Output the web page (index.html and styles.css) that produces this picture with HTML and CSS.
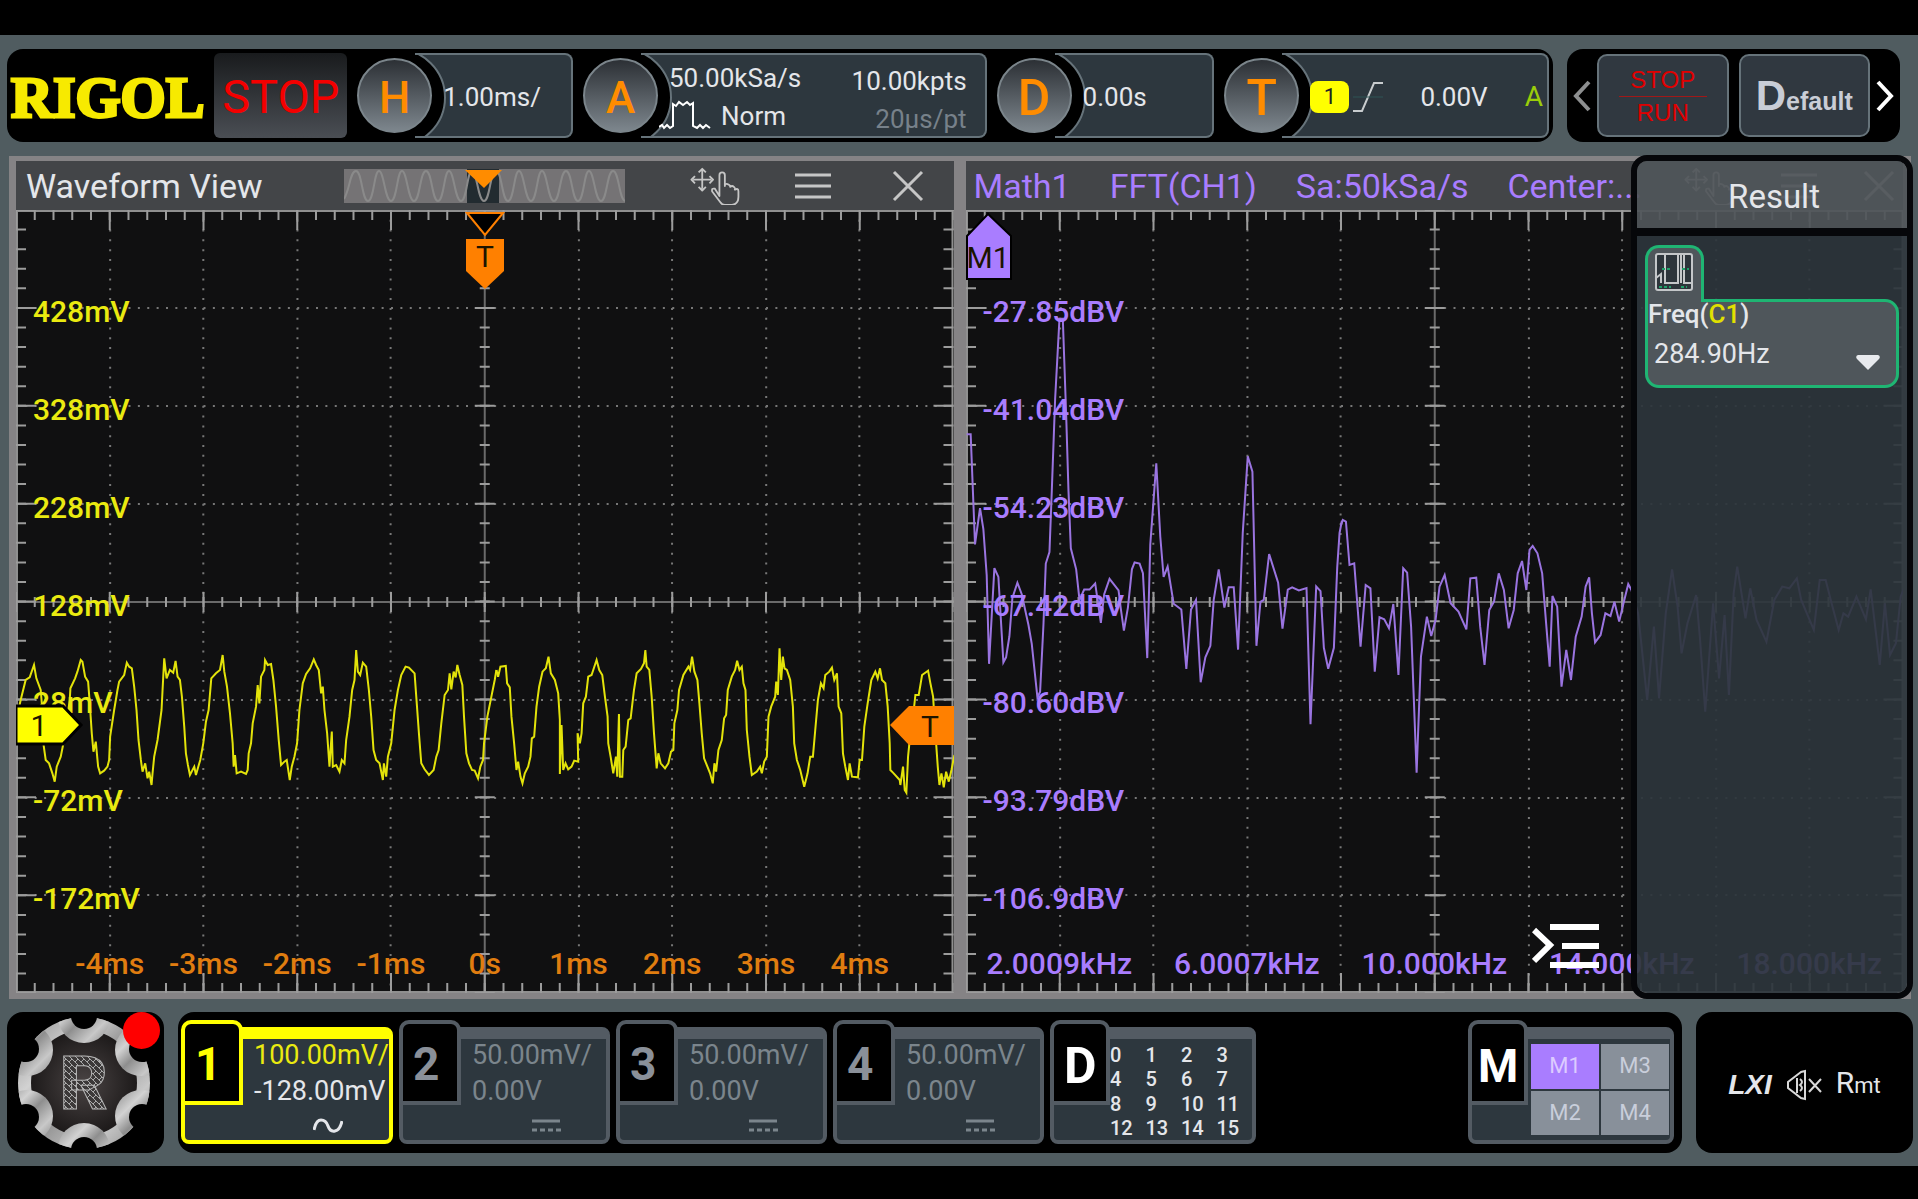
FILE: index.html
```html
<!DOCTYPE html>
<html lang="en">
<head>
  <meta charset="utf-8">
  <title>RIGOL</title>
  <link rel="stylesheet" href="styles.css">
</head>
<body>
<!-- shared drawings -->
<svg class="defs" aria-hidden="true">
  <defs>
    <g id="graticule" fill="none">
      <g stroke="#777" stroke-width="2">
        <path stroke-dasharray="2 7.79" d="M94 0V783M187 0V783M281 0V783M374 0V783M562 0V783M655 0V783M749 0V783M842 0V783"/>
        <path stroke-dasharray="2 7.36" d="M0 98H936M0 196H936M0 294H936M0 490H936M0 588H936M0 685H936"/>
      </g>
      <path stroke="#6a6a6a" stroke-width="2" d="M468 0V783M0 392H936"/>
      <rect x="1" y="1" width="934" height="781" stroke="#8f8f8f" stroke-width="2"/>
      <g stroke="#9c9c9c">
        <path stroke-width="10" stroke-dasharray="2 16.72" stroke-dashoffset="1" d="M0 5H936M0 392H936M0 778H936"/>
        <path stroke-width="20" stroke-dasharray="2 91.6" stroke-dashoffset="1" d="M0 10H936M0 392H936M0 773H936"/>
        <path stroke-width="10" stroke-dasharray="2 17.58" stroke-dashoffset="1" d="M5 0V783M468 0V783M931 0V783"/>
        <path stroke-width="20" stroke-dasharray="2 95.88" stroke-dashoffset="1" d="M10 0V783M468 0V783M926 0V783"/>
      </g>
    </g>
    <g id="drag-hand" fill="none" stroke="currentColor" stroke-width="2" stroke-linejoin="round">
      <path d="M14 4v20M4 14h20M10 6l4-4 4 4M10 22l4 4 4-4M6 10l-4 4 4 4M22 10l4 4-4 4"/>
      <path d="M33 32V9q0-3 3-3t3 3v12q0-3 3-2t3 3q2-2 4 0t1 3q4-2 4 2v6q0 8-7 9h-8q-3 0-5-3l-9-12q-1-4 3-3z"/>
    </g>
    <g id="menu-lines" stroke="currentColor" stroke-width="3">
      <path d="M0 3H36M0 14H36M0 25H36"/>
    </g>
    <path id="cross" fill="none" stroke="currentColor" stroke-width="3" d="M2 2L30 30M30 2L2 30"/>
    <g id="dc" stroke="currentColor" stroke-width="3">
      <path d="M1 3H29"/>
      <path stroke-dasharray="5 3" d="M1 12H30"/>
    </g>
  </defs>
</svg>

<div class="device">
  <header class="top">
    <div class="bar status-bar">
      <div class="logo">RIGOL</div>
      <button class="run-state">STOP</button>

      <section class="setting">
        <button class="knob">H</button>
        <div class="readout"><span>1.00ms/</span></div>
      </section>

      <section class="setting">
        <button class="knob">A</button>
        <div class="readout acquire">
          <div class="acquire-left">
            <span>50.00kSa/s</span>
            <span class="acquire-mode">
              <svg width="52" height="30" viewBox="0 0 52 30"><path fill="none" stroke="#fff" stroke-width="2" d="M0 27l3-2 2 3 3-3 3 3 3-2V4l3 2 3-4 4 3 4-3 3 3 3-2V26l4 2 3-3 3 3 3-3 4 3"/></svg>
              Norm
            </span>
          </div>
          <div class="acquire-right">
            <span>10.00kpts</span>
            <span class="dim">20µs/pt</span>
          </div>
        </div>
      </section>

      <section class="setting">
        <button class="knob knob-big">D</button>
        <div class="readout"><span>0.00s</span></div>
      </section>

      <section class="setting">
        <button class="knob knob-big">T</button>
        <div class="readout trigger">
          <b class="source">1</b>
          <svg width="30" height="32" viewBox="0 0 30 32"><path fill="none" stroke="#c8ccce" stroke-width="2" d="M0 30H9L21 2H30"/><path stroke="#2f5555" d="M0 16H30"/></svg>
          <span class="level">0.00V</span>
          <span class="sweep">A</span>
        </div>
      </section>
    </div>

    <div class="bar quick-bar">
      <button class="chevron" aria-label="Previous"><svg width="18" height="32" viewBox="0 0 18 32"><path fill="none" stroke="#8d8f90" stroke-width="4" d="M16 2L3 16L16 30"/></svg></button>
      <button class="quick stop-run"><span>STOP</span><span>RUN</span></button>
      <button class="quick default"><b>D</b>efault</button>
      <button class="chevron" aria-label="Next"><svg width="18" height="32" viewBox="0 0 18 32"><path fill="none" stroke="#fff" stroke-width="4" d="M2 2L15 16L2 30"/></svg></button>
    </div>
  </header>

  <main class="windows">
    <section class="window">
      <div class="window-head wave-head">
        <h2>Waveform View</h2>
        <svg class="memory" width="281" height="34" viewBox="0 0 281 34">
          <rect width="281" height="34" fill="#757375"/>
          <rect x="123" width="32" height="34" fill="#222b30"/>
          <path fill="none" stroke="#8a8a8a" stroke-width="2" d="M0 30C6 20 6 2 12 2S18 32 24 32S30 2 35 2S41 32 47 32S53 2 58 2S64 32 70 32S76 2 82 2S88 32 94 32S100 2 105 2S111 32 117 32S123 2 128 2S134 32 140 32S146 2 152 2S158 32 164 32S170 2 175 2S181 32 187 32S193 2 198 2S204 32 210 32S216 2 222 2S228 32 234 32S240 2 245 2S251 32 257 32S263 2 269 2S275 30 281 32"/>
          <path fill="#ff8c00" d="M121 1H158L140 19Z"/>
        </svg>
        <div class="tools">
          <button aria-label="Drag"><svg width="54" height="38" viewBox="0 0 54 42"><use href="#drag-hand"/></svg></button>
          <button aria-label="Menu"><svg width="36" height="28"><use href="#menu-lines"/></svg></button>
          <button aria-label="Close"><svg width="32" height="32"><use href="#cross"/></svg></button>
        </div>
      </div>
      <div class="plot ch1">
        <svg class="trace" viewBox="0 0 936 783" preserveAspectRatio="none">
          <use href="#graticule"/>
          <polyline transform="translate(-17 390) scale(.3333)" points="55,345 65,300 80,240 92,232 105,195 112,235 125,270 130,330 133,430 140,480 150,490 160,520 167,545 173,500 185,470 195,420 205,350 212,300 214,265 228,235 235,215 245,180 250,185 258,230 267,245 272,310 278,400 283,455 290,425 297,500 303,520 315,512 325,500 330,480 333,410 345,330 355,270 360,245 375,225 383,188 390,200 398,205 405,260 412,330 418,420 425,480 430,515 438,490 445,535 450,515 457,555 460,520 465,470 475,420 487,330 490,270 495,175 502,235 512,210 522,218 529,183 535,230 542,240 548,290 555,380 560,460 566,495 572,525 585,500 590,525 597,500 603,480 612,430 620,365 628,330 636,235 650,220 662,210 670,165 675,215 683,260 692,340 700,430 703,500 707,465 712,520 725,515 740,522 745,510 748,460 755,430 760,370 770,320 775,255 780,310 785,230 795,210 797,180 805,195 815,192 822,240 830,320 838,420 845,495 855,485 862,480 871,540 877,500 885,470 893,430 900,330 910,250 920,222 932,205 943,178 950,195 958,210 965,280 970,260 975,330 983,400 990,500 997,395 1000,500 1010,495 1020,515 1027,480 1035,490 1040,420 1050,350 1058,270 1065,240 1070,150 1075,215 1082,225 1090,188 1100,200 1108,270 1115,350 1122,450 1130,480 1140,490 1150,540 1153,490 1160,530 1165,470 1175,430 1185,330 1195,270 1205,225 1218,200 1228,203 1245,220 1250,290 1258,400 1265,490 1275,508 1288,525 1302,510 1310,470 1317,450 1325,370 1335,285 1345,270 1350,220 1355,268 1362,215 1368,232 1373,195 1380,225 1388,255 1393,350 1400,460 1408,490 1417,510 1425,512 1435,535 1442,500 1450,480 1453,430 1463,350 1475,290 1485,240 1490,210"/>
          <polyline transform="translate(463 390) scale(.3333)" points="50,210 55,230 62,200 78,198 82,250 90,262 95,350 103,430 110,510 115,485 122,530 128,550 135,520 145,500 152,470 156,415 163,410 170,320 178,260 188,215 198,205 206,170 213,220 225,240 235,280 240,360 240,522 245,375 250,510 257,490 265,508 275,500 283,482 295,485 293,400 300,430 305,400 310,310 318,290 325,230 335,225 350,180 358,210 367,225 375,290 383,350 385,430 392,470 400,520 408,470 412,530 417,342 420,530 427,530 430,450 437,440 445,360 452,355 462,270 470,220 483,207 492,190 496,150 500,200 508,210 515,290 522,400 530,505 535,460 542,490 555,505 565,490 573,455 580,450 583,370 592,330 597,270 610,225 625,200 630,210 636,170 643,215 652,240 658,310 665,400 672,475 682,500 690,520 698,550 703,490 708,515 715,450 725,420 732,355 738,345 743,270 755,230 765,210 771,182 778,210 785,200 790,250 796,270 800,390 808,470 815,525 830,515 840,500 845,520 852,485 860,470 865,350 873,320 885,290 888,245 893,285 898,145 903,240 908,170 913,205 920,210 930,240 938,320 942,430 950,480 960,510 972,560 982,520 990,470 998,470 1005,390 1013,300 1022,250 1030,265 1035,225 1047,215 1055,203 1062,240 1070,220 1075,320 1083,340 1088,460 1095,500 1103,540 1108,490 1115,530 1133,532 1138,480 1145,480 1152,380 1162,310 1173,240 1185,215 1192,235 1199,205 1205,240 1215,250 1222,320 1228,430 1230,510 1240,520 1258,540 1260,555 1268,500 1273,570 1278,578 1283,470 1290,400 1298,350 1305,285 1315,285 1325,225 1343,212 1350,250 1358,290 1365,400 1372,500 1377,555 1383,520 1390,562 1397,515 1405,545 1413,510 1422,465"/>
        </svg>
        <ul class="y-axis">
          <li>428mV</li>
          <li>328mV</li>
          <li>228mV</li>
          <li>128mV</li>
          <li>28mV</li>
          <li>-72mV</li>
          <li>-172mV</li>
        </ul>
        <ul class="x-axis time">
          <li>-4ms</li>
          <li>-3ms</li>
          <li>-2ms</li>
          <li>-1ms</li>
          <li>0s</li>
          <li>1ms</li>
          <li>2ms</li>
          <li>3ms</li>
          <li>4ms</li>
        </ul>
        <svg class="marker trig-pos" width="40" height="78" viewBox="0 0 40 78">
          <path fill="#000" stroke="#ff8000" stroke-width="2" d="M2 2H38L20 24Z"/>
          <path fill="#ff8000" d="M1 28H39V60L20 78L1 60Z"/>
          <text x="20" y="56" text-anchor="middle">T</text>
        </svg>
        <svg class="marker ch-pos" width="68" height="42" viewBox="0 0 68 42">
          <path fill="#ff0" stroke="#000" stroke-width="3" d="M0 2H47L65 21L47 40H0Z"/>
          <text x="23" y="32" text-anchor="middle">1</text>
        </svg>
        <svg class="marker trig-level" width="64" height="39" viewBox="0 0 64 39">
          <path fill="#ff8000" d="M0 19L19 0H64V39H19Z"/>
          <text x="40" y="31" text-anchor="middle">T</text>
        </svg>
      </div>
    </section>

    <section class="window">
      <div class="window-head math-head">
        <h2>Math1</h2>
        <span>FFT(CH1)</span>
        <span>Sa:50kSa/s</span>
        <span>Center:...</span>
        <div class="tools">
          <button aria-label="Drag"><svg width="54" height="38" viewBox="0 0 54 42"><use href="#drag-hand"/></svg></button>
          <button aria-label="Menu"><svg width="36" height="28"><use href="#menu-lines"/></svg></button>
          <button aria-label="Close"><svg width="32" height="32"><use href="#cross"/></svg></button>
        </div>
      </div>
      <div class="plot math1">
        <svg class="trace" viewBox="0 0 936 783" preserveAspectRatio="none">
          <use href="#graticule"/>
          <polyline transform="translate(-16 -10) scale(.3333 .3827)" points="50,612 62,612 75,900 90,805 100,860 110,980 117,1212 133,962 145,985 160,1208 168,1195 178,1140 187,1040 202,1000 215,1030 235,1110 245,1160 262,1300 270,1285 280,1110 287,950 298,920 305,760 315,520 328,310 338,310 348,560 355,760 362,910 378,965 388,1045 402,1018 418,1018 435,1002 443,1050 452,1105 462,1030 478,990 505,1020 512,1070 521,1125 533,1065 545,965 553,947 568,950 578,975 591,1197 600,900 618,688 630,880 640,985 652,958 670,1055 693,1070 708,1225 722,1070 737,1045 751,1260 765,1195 780,1165 790,1045 805,965 822,1065 835,1012 850,1012 863,1175 877,870 892,670 906,710 918,1165 930,1050 940,1045 956,925 983,1000 996,1120 1012,1018 1025,1012 1045,1020 1068,1014 1080,1370 1097,1010 1110,1022 1120,1170 1133,1225 1150,1170 1160,960 1167,870 1174,838"/>
          <polyline transform="translate(334 170) scale(.3942 .3333)" points="103,434 107,420 115,425 124,555 136,550 145,690 152,800 165,615 177,625 188,875 200,712 212,718 224,745 235,672 248,885 260,565 270,578 280,740 294,1178 305,830 320,710 331,768 342,720 352,620 365,585 380,670 400,695 420,748 430,595 445,593 455,740 466,855 478,690 490,665 502,580 515,630 527,745 540,690 550,580 561,543 572,630 580,510 588,498 600,520 612,580 622,730 631,860 638,648 650,680 661,920 673,810 685,900 697,770 712,710 722,620 731,592 738,700 746,787 760,765 772,700 785,708 795,665 807,725 818,670 830,612 838,630 855,700 878,960 895,740 908,955 925,700 941,568 955,680 965,820 980,730 1002,645 1012,780 1025,995 1045,670 1060,895 1074,705 1085,945 1097,640 1106,560 1127,715 1139,625 1155,720 1180,785 1200,660 1220,620 1238,625 1257,595 1268,660 1300,750 1315,600 1330,600 1345,670 1363,750 1375,700 1387,710 1408,650 1432,718 1444,628 1467,855 1480,670 1493,825 1508,790 1520,650 1530,620"/>
        </svg>
        <ul class="y-axis">
          <li>-27.85dBV</li>
          <li>-41.04dBV</li>
          <li>-54.23dBV</li>
          <li>-67.42dBV</li>
          <li>-80.60dBV</li>
          <li>-93.79dBV</li>
          <li>-106.9dBV</li>
        </ul>
        <ul class="x-axis freq">
          <li>2.0009kHz</li>
          <li>6.0007kHz</li>
          <li>10.000kHz</li>
          <li>14.000kHz</li>
          <li>18.000kHz</li>
        </ul>
        <svg class="marker math-pos" width="47" height="69" viewBox="0 0 47 69">
          <path fill="#a97dff" stroke="#000" stroke-width="2" d="M1 25L22 3L45 25V68H1Z"/>
          <text x="22" y="57" text-anchor="middle">M1</text>
        </svg>
      </div>
    </section>

    <button class="collapse" aria-label="Hide results">
      <svg width="68" height="46" viewBox="0 0 68 46"><path fill="none" stroke="#fff" stroke-width="6" d="M2 7L18 22L2 38M18 4H67M30 23H67M18 42H67"/></svg>
    </button>

    <aside class="result">
      <h2>Result</h2>
      <div class="result-body">
        <div class="measure-tab">
          <svg width="38" height="38" viewBox="0 0 38 38"><rect x="1" y="1" width="36" height="36" rx="2" fill="#2d353b" stroke="#c4c7c9" stroke-width="2"/><path fill="none" stroke="#c4c7c9" stroke-width="2" d="M1 25l5-4v9M10 1V30H23V1M29 1V30H37M26 1V30"/><path stroke="#20a06a" stroke-width="2" stroke-dasharray="3 2" d="M7 16H16M27 16H34M4 34H16M26 34H32"/></svg>
        </div>
        <div class="measure">
          <div class="measure-name">Freq(<em>C1</em>)</div>
          <div class="measure-value">284.90Hz
            <button aria-label="Expand"><svg width="24" height="15" viewBox="0 0 24 15"><path fill="#e8eaee" d="M2 0H22Q25 1 23 4L12 15L1 4Q-1 1 2 0Z"/></svg></button>
          </div>
        </div>
      </div>
    </aside>
  </main>

  <footer class="bottom">
    <button class="tile home" aria-label="Menu">
      <svg width="134" height="134" viewBox="-67 -67 134 134">
        <defs>
          <linearGradient id="steel" x1="0" y1="0" x2="1" y2="1">
            <stop offset="0" stop-color="#8b8b8b"/><stop offset=".3" stop-color="#d2d2d2"/><stop offset=".5" stop-color="#8e8e8e"/><stop offset=".75" stop-color="#c8c8c8"/><stop offset="1" stop-color="#858585"/>
          </linearGradient>
          <radialGradient id="core"><stop offset="0" stop-color="#4a4444"/><stop offset="1" stop-color="#1d1a1a"/></radialGradient>
          <pattern id="mesh" width="6" height="6" patternUnits="userSpaceOnUse"><rect width="6" height="6" fill="#3c3939"/><path stroke="#a9a9a9" d="M0 0L6 6M6 0L3 3"/></pattern>
          <clipPath id="rim"><circle r="66"/></clipPath>
        </defs>
        <circle r="66" fill="url(#steel)"/>
        <circle r="53" fill="url(#core)"/>
        <g clip-path="url(#rim)" fill="url(#steel)">
          <circle cy="-66" r="26"/><circle cy="66" r="26"/><circle cx="-57" cy="-33" r="26"/><circle cx="57" cy="-33" r="26"/><circle cx="-57" cy="33" r="26"/><circle cx="57" cy="33" r="26"/>
        </g>
        <g fill="#000">
          <circle cy="-67" r="13"/><circle cy="67" r="13"/><circle cx="-58" cy="-34" r="13"/><circle cx="58" cy="-34" r="13"/><circle cx="-58" cy="34" r="13"/><circle cx="58" cy="34" r="13"/>
        </g>
        <text class="home-letter" y="26" text-anchor="middle">R</text>
      </svg>
      <i class="notice"></i>
    </button>

    <div class="tile channels">
      <button class="channel on">
        <b class="channel-id">1</b>
        <span class="channel-info">
          <span class="scale">100.00mV/</span>
          <span>-128.00mV</span>
          <svg width="30" height="15" viewBox="0 0 30 15"><path fill="none" stroke="#e4e6ea" stroke-width="3" d="M1 12Q3 2 8 2T15 8T22 13T29 3"/></svg>
        </span>
      </button>
      <button class="channel">
        <b class="channel-id">2</b>
        <span class="channel-info">
          <span class="scale">50.00mV/</span>
          <span>0.00V</span>
          <svg width="30" height="15"><use href="#dc"/></svg>
        </span>
      </button>
      <button class="channel">
        <b class="channel-id">3</b>
        <span class="channel-info">
          <span class="scale">50.00mV/</span>
          <span>0.00V</span>
          <svg width="30" height="15"><use href="#dc"/></svg>
        </span>
      </button>
      <button class="channel">
        <b class="channel-id">4</b>
        <span class="channel-info">
          <span class="scale">50.00mV/</span>
          <span>0.00V</span>
          <svg width="30" height="15"><use href="#dc"/></svg>
        </span>
      </button>
      <button class="channel digital">
        <b class="channel-id">D</b>
        <span class="bits">
          <span>0</span><span>1</span><span>2</span><span>3</span>
          <span>4</span><span>5</span><span>6</span><span>7</span>
          <span>8</span><span>9</span><span>10</span><span>11</span>
          <span>12</span><span>13</span><span>14</span><span>15</span>
        </span>
      </button>
      <div class="channel math">
        <b class="channel-id">M</b>
        <div class="math-list">
          <button class="active">M1</button>
          <button>M3</button>
          <button>M2</button>
          <button>M4</button>
        </div>
      </div>
    </div>

    <div class="tile system">
      <span class="lxi">LXI</span>
      <svg width="36" height="32" viewBox="0 0 36 32"><path fill="none" stroke="#d8d8d8" stroke-width="2" d="M15 3L2 13V19L15 29L19 30V2ZM11 9V24M14 10Q18 13 14 16Q18 19 14 22M23 10L35 23M35 10L23 23"/></svg>
      <span class="rmt">R<small>mt</small></span>
    </div>
  </footer>
</div>
</body>
</html>
```
FILE: styles.css
```css
*{
    box-sizing: border-box;
}
body{
    margin: 0;
    min-height: 100vh;
    padding: 35px 0 33px;
    display: flex;
    flex-direction: column;
    background: #000;
    color: #e4e6ea;
    font-family: Roboto, "Liberation Sans", sans-serif;
    font-size: 26px;
    line-height: 32px;
}
button{
    margin: 0;
    padding: 0;
    border: 0;
    background: none;
    color: inherit;
    font: inherit;
    text-align: left;
    cursor: pointer;
}
h2{
    margin: 0;
    font-size: inherit;
    font-weight: 400;
}
ul{
    margin: 0;
    padding: 0;
    list-style: none;
}
svg{
    display: block;
}
.defs{
    position: absolute;
    width: 0;
    height: 0;
}
.device{
    flex: 1;
    display: flex;
    flex-direction: column;
    gap: 13px;
    padding: 14px 5px 13px 7px;
    background: #505c60;
}

/* top bars */
.top{
    display: grid;
    grid-template-columns: 1546fr 333fr;
    gap: 14px;
    margin-right: 13px;
}
.bar{
    height: 93px;
    border-radius: 16px;
    background: #000;
}
.status-bar{
    display: grid;
    grid-template-columns: 192fr 133fr 216fr 404fr 218fr 325fr;
    gap: 10px;
    padding: 4px;
}
.logo{
    align-self: center;
    padding-top: 4px;
    color: #f7ea00;
    font: bold 58px/64px "Liberation Serif", serif;
    -webkit-text-stroke: 3px #f7ea00;
}
.run-state{
    padding-top: 3px;
    border-radius: 6px;
    background: linear-gradient(#191b1d, #4a4e54);
    color: #f40000;
    font-size: 47px;
    text-align: center;
}
.setting{
    position: relative;
    display: flex;
    align-items: center;
}
.knob{
    z-index: 1;
    flex: none;
    width: 75px;
    height: 75px;
    padding-top: 4px;
    border: 2px solid #7b858b;
    border-radius: 50%;
    background: linear-gradient(#2c3035, #7d868d);
    color: #ff8c00;
    font-size: 44px;
    font-weight: 500;
    text-align: center;
}
.knob-big{
    font-size: 50px;
}
.readout{
    position: relative;
    overflow: hidden;
    flex: 1;
    height: 85px;
    margin-left: -17px;
    padding: 3px 0 0 28px;
    display: flex;
    align-items: center;
    border: 2px solid #66737a;
    border-left: 0;
    border-radius: 0 8px 8px 0;
    background: #2d373e;
    white-space: nowrap;
}
/* black cut-out round the knob */
.readout::before{
    content: "";
    position: absolute;
    left: -68px;
    top: -7px;
    width: 95px;
    height: 95px;
    border: 2px solid #66737a;
    border-radius: 50%;
    background: #000;
}
.readout > *{
    position: relative;
}
.acquire{
    justify-content: space-between;
    padding-right: 18px;
}
.acquire-left,
.acquire-right{
    display: flex;
    flex-direction: column;
    gap: 6px;
}
.acquire-right{
    padding-top: 6px;
    text-align: right;
}
.acquire-mode{
    display: flex;
    gap: 10px;
    margin-left: -10px;
}
.dim{
    color: #77818a;
}
.trigger{
    padding-right: 4px;
}
.source{
    width: 39px;
    border-radius: 8px;
    background: #ff0;
    color: #222;
    font-size: 22px;
    font-weight: 400;
    text-align: center;
}
.trigger svg{
    margin-left: 4px;
}
.level{
    margin: 0 auto;
}
.sweep{
    color: #9acd0a;
    font-size: 28px;
}
.quick-bar{
    display: flex;
    align-items: center;
    justify-content: space-between;
    gap: 6px;
    padding: 5px 6px;
}
.quick{
    flex: 1;
    height: 83px;
    border: 2px solid #66737a;
    border-radius: 10px;
    background: #303840;
    font-family: "Liberation Sans", sans-serif;
}
.quick + .quick{
    margin-left: 4px;
}
.stop-run{
    display: flex;
    flex-direction: column;
    align-items: center;
    justify-content: center;
    padding-top: 2px;
    color: #e00000;
    font-size: 24px;
}
.stop-run span{
    width: 88px;
    text-align: center;
}
.stop-run span + span{
    border-top: 1px solid #a01818;
}
.default{
    padding-top: 6px;
    color: #c9cdd6;
    font-weight: bold;
    font-size: 25px;
    text-align: center;
}
.default b{
    font-size: 42px;
}

/* windows */
.windows{
    position: relative;
    flex: 1;
    display: grid;
    grid-template-columns: 1fr 1fr;
    gap: 12px;
    margin: 1px 2px 0;
    padding: 5px 8px 6px 7px;
    background: #858385;
}
.window{
    display: flex;
    flex-direction: column;
    min-width: 0;
}
.window-head{
    height: 49px;
    display: flex;
    align-items: center;
    padding: 0 30px 0 10px;
    background: #434548;
    font-size: 34px;
    white-space: nowrap;
}
.wave-head{
    display: grid;
    grid-template-columns: 1fr auto 1fr;
}
.math-head{
    gap: 39px;
    padding: 0 44px 0 8px;
    color: #a97dff;
}
.tools{
    display: flex;
    align-items: center;
    justify-content: flex-end;
    gap: 54px;
    color: #c6c6c6;
}
.wave-head .tools button:last-child{
    margin-left: 7px;
}
.math-head .tools{
    margin-left: auto;
    gap: 46px;
}
.wave-head .memory{
    margin-left: 20px;
}
.plot{
    position: relative;
    flex: 1;
    overflow: hidden;
    background: #101011;
    font-size: 30px;
    font-weight: 500;
}
.trace{
    position: absolute;
    width: 100%;
    height: 100%;
}
.trace polyline{
    fill: none;
    stroke-width: 2px;
    vector-effect: non-scaling-stroke;
}
.ch1{
    color: #eaea10;
}
.ch1 polyline{
    stroke: #e3e30a;
}
.math1{
    color: #a97dff;
}
.math1 polyline{
    stroke: #9a74e0;
}
/* labels are centred on the division lines, half a division is left at each end */
.y-axis{
    position: absolute;
    inset: 4px auto -4px 17px;
    display: grid;
    grid-template-rows: 1fr repeat(7, 2fr) 1fr;
    align-items: center;
}
.y-axis::before,
.time::before{
    content: "";
}
.x-axis{
    position: absolute;
    inset: auto 0 13px;
    display: grid;
    justify-items: center;
}
.time{
    grid-template-columns: 1fr repeat(9, 2fr) 1fr;
    color: #e07d10;
}
.freq{
    grid-template-columns: repeat(5, 1fr);
}
.marker{
    position: absolute;
}
.marker text{
    fill: #1c1400;
    font-size: 30px;
    font-weight: 400;
}
.trig-pos{
    left: 50%;
    top: 1px;
    margin-left: -20px;
}
.ch-pos{
    left: 0;
    top: 63%;
    margin-top: 1px;
}
.trig-level{
    right: 0;
    top: 63%;
    margin-top: 3px;
}
.math-pos{
    left: 0;
    top: 1px;
}
.collapse{
    position: absolute;
    right: 311px;
    bottom: 30px;
}

/* result panel */
.result{
    position: absolute;
    top: -1px;
    right: -2px;
    bottom: 0;
    width: 282px;
    display: flex;
    flex-direction: column;
    overflow: hidden;
    border: 6px solid #06070a;
    border-radius: 16px;
}
.result h2{
    height: 75px;
    border-bottom: 8px solid #06070a;
    background: rgba(80, 85, 89, .93);
    font-size: 33px;
    line-height: 72px;
    text-align: center;
    text-indent: 4px;
}
.result-body{
    flex: 1;
    padding: 9px 8px;
    background: rgba(45, 53, 60, .92);
}
.measure-tab{
    position: relative;
    z-index: 1;
    width: 59px;
    height: 57px;
    padding: 5px 7px;
    border: 3px solid #1fb573;
    border-bottom: 0;
    border-radius: 14px 14px 0 0;
    background: #4f565b;
}
.measure{
    height: 89px;
    margin-top: -3px;
    border: 3px solid #1fb573;
    border-radius: 0 14px 14px 14px;
    background: #4f565b;
    line-height: 40px;
}
.measure-name{
    height: 32px;
    line-height: 25px;
    font-weight: 500;
}
.measure-name em{
    color: #e0e000;
    font-style: normal;
}
.measure-value{
    display: flex;
    align-items: center;
    justify-content: space-between;
    padding: 0 16px 0 6px;
    font-size: 27px;
}
.measure-value button{
    padding-top: 16px;
}

/* bottom bar */
.bottom{
    display: grid;
    grid-template-columns: 157px 1fr 217px;
    gap: 14px;
}
.tile{
    height: 141px;
    border-radius: 16px;
    background: #000;
}
.home{
    position: relative;
    padding-left: 10px;
}
.home-letter{
    fill: url(#mesh);
    stroke: #b5b5b5;
    font-size: 74px;
    font-weight: 900;
}
.notice{
    position: absolute;
    top: 0;
    right: 4px;
    width: 37px;
    height: 37px;
    border-radius: 50%;
    background: #f00;
}
.channels{
    display: flex;
    gap: 6px;
    padding: 8px 8px 8px 3px;
}
.channel{
    --line: #535b63;
    position: relative;
    flex: 0 1 211px;
    height: 117px;
    margin-top: 7px;
    padding-left: 62px;
    border: 4px solid var(--line);
    border-top-width: 12px;
    border-radius: 8px;
    background: #2d373e;
    color: #7b858c;
    white-space: nowrap;
}
/* number tab sticks out above the tile */
.channel-id{
    position: absolute;
    left: -4px;
    top: -19px;
    width: 62px;
    height: 85px;
    border: 4px solid var(--line);
    border-radius: 10px 10px 0 0;
    background: #000;
    color: #8a9099;
    font-size: 46px;
    font-weight: 700;
    line-height: 80px;
    padding-left: 10px;
}
.channel.on{
    --line: #ff0;
    color: #e4e6ea;
}
.on .channel-id{
    color: #ff0;
}
.on .scale{
    color: #eaea10;
}
.channel-info{
    display: flex;
    flex-direction: column;
    gap: 4px;
    height: 100%;
    margin-left: 7px;
    font-size: 27px;
}
.channel-info svg{
    margin: 7px 0 0 59px;
}
.digital,
.math{
    flex-basis: 206px;
    color: #e4e6ea;
}
.digital .channel-id,
.math .channel-id{
    width: 60px;
    color: #fff;
    line-height: 84px;
}
.digital .channel-id{
    font-size: 50px;
}
.math .channel-id{
    padding-left: 6px;
}
.digital{
    padding-left: 56px;
}
.bits{
    display: grid;
    grid-template-columns: repeat(4, 1fr);
    height: 100%;
    padding-top: 4px;
    font-size: 20px;
    font-weight: 500;
    line-height: 24px;
}
.math{
    margin-left: auto;
    padding: 5px 1px 5px 59px;
}
.math-list{
    height: 100%;
    display: grid;
    grid-template-columns: 1fr 1fr;
    gap: 2px;
}
.math-list button{
    background: #88909a;
    color: #c9cedb;
    font-size: 22px;
    text-align: center;
}
.math-list .active{
    background: #a97dff;
    color: #dccbff;
}
.system{
    display: flex;
    align-items: center;
    justify-content: center;
    gap: 14px;
    padding-top: 4px;
}
.lxi{
    font: italic bold 28px/32px "Liberation Sans", sans-serif;
}
.rmt{
    font-size: 30px;
}
.rmt small{
    font-size: 22px;
}
```
